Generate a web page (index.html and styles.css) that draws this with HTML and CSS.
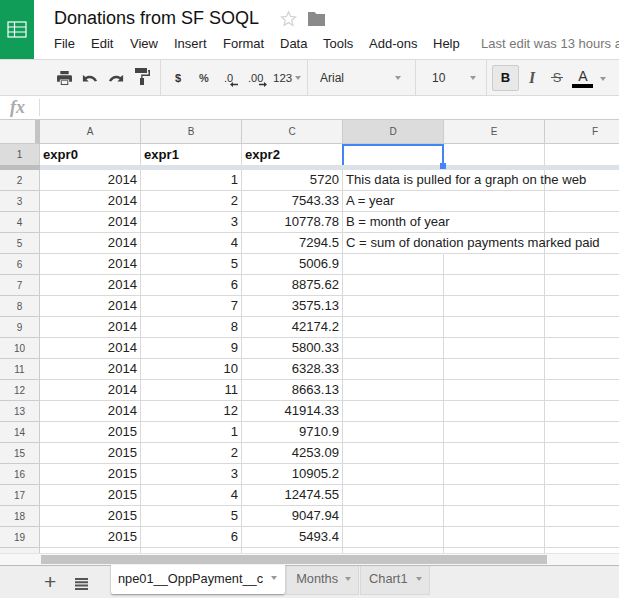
FILE: index.html
```html
<!DOCTYPE html>
<html lang="en">
<head>
<meta charset="utf-8">
<title>Donations from SF SOQL</title>
<link rel="stylesheet" href="styles.css">
</head>
<body>
<div class="app">
  <header class="header">
    <div class="logo">
      <svg width="20" height="17" viewBox="0 0 20 17" fill="none" stroke="#fff" stroke-width="1.2"><rect x="1" y="1" width="18" height="15"/><path d="M1 6h18M1 11h18M7.500 1v15"/></svg>
    </div>
    <div class="head-main">
      <div class="title-row">
        <span class="title">Donations from SF SOQL</span>
        <svg class="star" width="17" height="17" viewBox="0 0 24 24" fill="none" stroke="#d4d4d4" stroke-width="1.800"><path d="M12 2.500l2.900 6.600 7.100.7-5.400 4.700 1.600 7-6.200-3.700-6.200 3.700 1.600-7L2 9.800l7.100-.7z"/></svg>
        <svg class="folder" width="17" height="14" viewBox="0 0 17 14"><path fill="#8a8a8a" d="M0 0h6.500l2 2H17v12H0z"/></svg>
      </div>
      <nav class="menu">
        <span class="m m-file">File</span><span class="m m-edit">Edit</span><span class="m m-view">View</span><span class="m m-insert">Insert</span><span class="m m-format">Format</span><span class="m m-data">Data</span><span class="m m-tools">Tools</span><span class="m m-addons">Add-ons</span><span class="m m-help">Help</span><span class="m last-edit">Last edit was 13 hours a</span>
      </nav>
    </div>
  </header>

  <div class="toolbar">
    <div class="tb-group g-file">
      <svg width="15" height="14" viewBox="0 0 16 15"><path fill="#444" d="M3.500 0h9v3.500h-9zM1.500 4.500h13a1.500 1.500 0 0 1 1.500 1.500v5.500h-3V9H3v2.500H0V6a1.500 1.500 0 0 1 1.500-1.500zM4 10h8v5H4z"/><path fill="#f4f4f4" d="M5 10.500h6v3.500H5z"/></svg>
      <svg width="16" height="8" viewBox="0 0 16 9"><path fill="#444" d="M0 1v7.500h6.500L4 6c3-2.300 7-1.500 9.500 2.500L16 7.500C13 1.500 7 .5 3 3.500z"/></svg>
      <svg width="16" height="8" viewBox="0 0 16 9"><path fill="#444" d="M16 1v7.500H9.500L12 6C9 3.700 5 4.500 2.500 8.500L0 7.500C3 1.500 9 .5 13 3.500z"/></svg>
      <svg class="roller" width="15" height="17" viewBox="0 0 15 17"><path fill="#444" d="M0 0h12v5H0zM13 2h2v6H7.500v2H9v7H5v-7h1.200V6.500H13.500V3.500H13z"/></svg>
    </div>
    <div class="tb-group g-num">
      <span class="tb-txt cur">$</span>
      <span class="tb-txt pct">%</span>
      <span class="dec">.0<svg width="8" height="5" viewBox="0 0 8 5"><path fill="#333" d="M0 2.500 3 0v1.700h5v1.600H3V5z"/></svg></span>
      <span class="dec dec2">.00<svg width="8" height="5" viewBox="0 0 8 5"><path fill="#333" d="M8 2.500 5 0v1.700H0v1.600h5V5z"/></svg></span>
      <span class="tb-txt n123">123</span><i class="caret"></i>
    </div>
    <div class="tb-group g-font"><span class="tb-txt font-name">Arial</span><i class="caret"></i></div>
    <div class="tb-group g-size"><span class="tb-txt font-name">10</span><i class="caret"></i></div>
    <div class="tb-group g-style">
      <span class="btn-b">B</span>
      <span class="btn-i">I</span>
      <span class="btn-s">S</span>
      <span class="btn-a">A<i class="a-bar"></i></span><i class="caret"></i>
    </div>
  </div>

  <div class="formula"><span class="fx">fx</span><i class="fx-sep"></i></div>

  <div class="sheet">
    <div class="grid" id="grid">
      <div class="corner"></div><div class="ch">A</div><div class="ch">B</div><div class="ch">C</div><div class="ch ch-sel">D</div><div class="ch">E</div><div class="ch">F</div>
      <div class="rh rh-sel r1">1</div><div class="c r1 b">expr0</div><div class="c r1 b">expr1</div><div class="c r1 b">expr2</div><div class="c r1 sel-cell"><span class="sel-handle"></span></div><div class="c r1"></div><div class="c r1"></div>
      <div class="freeze"></div>
      <div class="rh">2</div><div class="c n">2014</div><div class="c n">1</div><div class="c n">5720</div><div class="c t">This data is pulled for a graph on the web</div><div class="c"></div><div class="c"></div>
      <div class="rh">3</div><div class="c n">2014</div><div class="c n">2</div><div class="c n">7543.33</div><div class="c t">A = year</div><div class="c"></div><div class="c"></div>
      <div class="rh">4</div><div class="c n">2014</div><div class="c n">3</div><div class="c n">10778.78</div><div class="c t">B = month of year</div><div class="c"></div><div class="c"></div>
      <div class="rh">5</div><div class="c n">2014</div><div class="c n">4</div><div class="c n">7294.5</div><div class="c t">C = sum of donation payments marked paid</div><div class="c"></div><div class="c"></div>
      <div class="rh">6</div><div class="c n">2014</div><div class="c n">5</div><div class="c n">5006.9</div><div class="c"></div><div class="c"></div><div class="c"></div>
      <div class="rh">7</div><div class="c n">2014</div><div class="c n">6</div><div class="c n">8875.62</div><div class="c"></div><div class="c"></div><div class="c"></div>
      <div class="rh">8</div><div class="c n">2014</div><div class="c n">7</div><div class="c n">3575.13</div><div class="c"></div><div class="c"></div><div class="c"></div>
      <div class="rh">9</div><div class="c n">2014</div><div class="c n">8</div><div class="c n">42174.2</div><div class="c"></div><div class="c"></div><div class="c"></div>
      <div class="rh">10</div><div class="c n">2014</div><div class="c n">9</div><div class="c n">5800.33</div><div class="c"></div><div class="c"></div><div class="c"></div>
      <div class="rh">11</div><div class="c n">2014</div><div class="c n">10</div><div class="c n">6328.33</div><div class="c"></div><div class="c"></div><div class="c"></div>
      <div class="rh">12</div><div class="c n">2014</div><div class="c n">11</div><div class="c n">8663.13</div><div class="c"></div><div class="c"></div><div class="c"></div>
      <div class="rh">13</div><div class="c n">2014</div><div class="c n">12</div><div class="c n">41914.33</div><div class="c"></div><div class="c"></div><div class="c"></div>
      <div class="rh">14</div><div class="c n">2015</div><div class="c n">1</div><div class="c n">9710.9</div><div class="c"></div><div class="c"></div><div class="c"></div>
      <div class="rh">15</div><div class="c n">2015</div><div class="c n">2</div><div class="c n">4253.09</div><div class="c"></div><div class="c"></div><div class="c"></div>
      <div class="rh">16</div><div class="c n">2015</div><div class="c n">3</div><div class="c n">10905.2</div><div class="c"></div><div class="c"></div><div class="c"></div>
      <div class="rh">17</div><div class="c n">2015</div><div class="c n">4</div><div class="c n">12474.55</div><div class="c"></div><div class="c"></div><div class="c"></div>
      <div class="rh">18</div><div class="c n">2015</div><div class="c n">5</div><div class="c n">9047.94</div><div class="c"></div><div class="c"></div><div class="c"></div>
      <div class="rh">19</div><div class="c n">2015</div><div class="c n">6</div><div class="c n">5493.4</div><div class="c"></div><div class="c"></div><div class="c"></div>
      <div class="rh">20</div><div class="c n">2015</div><div class="c n">7</div><div class="c n">5793</div><div class="c"></div><div class="c"></div><div class="c"></div>
    </div>
  </div>

  <div class="hscroll"><div class="hthumb"></div></div>

  <footer class="tabs">
    <span class="add">+</span>
    <svg class="list" width="13" height="12" viewBox="0 0 13 12"><path fill="#555" d="M0 0h13v2H0zM0 3.300h13v2H0zM0 6.600h13v2H0zM0 10h13v2H0z"/></svg>
    <div class="tab tab-active">npe01__OppPayment__c<i class="caret"></i></div>
    <div class="tab tab-months">Months<i class="caret"></i></div>
    <div class="tab">Chart1<i class="caret"></i></div>
  </footer>
</div>
</body>
</html>
```
FILE: styles.css
```css
* { box-sizing: border-box; }
html, body { margin: 0; padding: 0; overflow: hidden; background: #fff; }
body { font-family: "Liberation Sans", Arial, sans-serif; color: #222; }
i { font-style: normal; display: block; }

.app { width: 619px; height: 598px; display: flex; flex-direction: column; overflow: hidden; }

/* header */
.header { height: 60px; display: flex; flex: none; border-bottom: 1px solid #dcdcdc; }
.logo { width: 34px; height: 59px; background: #0f9d58; display: flex; align-items: center; justify-content: center; }
.logo svg { margin-top: -1px; }
.head-main { margin-left: 20px; flex: 1; min-width: 0; overflow: hidden; }
.title-row { height: 35px; display: flex; align-items: center; padding-top: 2px; }
.title { font-size: 18px; color: #111; width: 226px; white-space: nowrap; }
.star { margin-right: 11px; }
.menu { display: flex; white-space: nowrap; font-size: 13px; color: #222; padding-top: 1px; }
.m { flex: none; }
.m-file { width: 37px; } .m-edit { width: 39px; } .m-view { width: 44px; }
.m-insert { width: 49px; } .m-format { width: 57px; } .m-data { width: 43px; }
.m-tools { width: 46px; } .m-addons { width: 64px; } .m-help { width: 48px; }
.last-edit { color: #777; }

/* toolbar */
.toolbar { height: 36px; flex: none; background: #f4f4f4; border-bottom: 1px solid #dcdcdc; display: flex; }
.tb-group { height: 35px; display: flex; align-items: center; border-right: 1px solid #dcdcdc; flex: none; }
.g-file { width: 161px; padding-left: 57px; gap: 10px; }
.roller { margin-top: -2px; margin-left: 1px; }
.g-num { width: 147px; padding-left: 14px; font-size: 11px; }
.g-font { width: 108px; padding-left: 12px; justify-content: space-between; padding-right: 14px; }
.g-size { width: 71px; padding-left: 16px; justify-content: space-between; padding-right: 10px; }
.g-style { width: 124px; padding-left: 5px; border-right: 0; }
.tb-txt { font-size: 11px; color: #333; }
.font-name { font-size: 12px; }
.cur { font-weight: 700; width: 24px; }
.pct { font-weight: 700; width: 25px; color: #444; }
.dec { font-size: 11px; color: #333; width: 24px; position: relative; }
.dec svg { position: absolute; left: 6px; top: 10px; }
.dec2 { width: 25px; }
.dec2 svg { left: 11px; }
.n123 { font-size: 11.500px; }
.g-num .caret { margin-left: 3px; }
.caret { width: 0; height: 0; border: 3px solid transparent; border-top: 4px solid #999; border-bottom: 0; flex: none; }
.btn-b { width: 27px; height: 26px; background: #e8e8e8; border: 1px solid #ccc; border-radius: 2px; font-weight: 700; font-size: 13px; text-align: center; line-height: 24px; color: #111; }
.btn-i { width: 24px; margin-left: 1px; text-align: center; font-family: "Liberation Serif", serif; font-style: italic; font-weight: 700; font-size: 16px; color: #555; }
.btn-s { width: 24px; margin-left: 1px; text-align: center; font-size: 13px; color: #555; position: relative; }
.btn-s::after { content: ""; position: absolute; left: 6px; top: 7px; width: 12px; height: 1px; background: #555; }
.btn-a { width: 22px; margin-left: 3px; font-size: 14px; color: #333; text-align: center; position: relative; line-height: 16px; margin-top: -4px; }
.a-bar { position: absolute; left: 0; top: 16px; width: 21px; height: 4px; background: #000; }
.g-style .caret { margin-left: 6px; margin-top: 2px; }

/* formula bar */
.formula { height: 24px; flex: none; background: #fff; border-bottom: 1px solid #ccc; display: flex; align-items: center; }
.fx { font-family: "Liberation Serif", serif; font-style: italic; font-weight: 700; font-size: 18px; color: #aaa; width: 39px; padding-left: 10px; }
.fx-sep { width: 1px; height: 17px; background: #ddd; }

/* sheet */
.sheet { height: 433px; flex: none; overflow: hidden; }
.grid { display: grid; grid-template-columns: 40px repeat(6, 101px); grid-template-rows: 24px 21px 5px repeat(19, 21px); width: 646px; font-size: 13.100px; }
.corner { background: #f3f3f3; border-bottom: 1px solid #ccc; border-right: 5px solid #c4c4c4; }
.ch { background: #f3f3f3; border-right: 1px solid #ccc; border-bottom: 1px solid #ccc; display: flex; align-items: center; justify-content: center; font-size: 10px; color: #555; }
.ch-sel { background: #dcdcdc; }
.rh { background: #f3f3f3; border-right: 1px solid #ccc; border-bottom: 1px solid #ccc; display: flex; align-items: center; justify-content: center; font-size: 10px; color: #555; }
.rh-sel { background: #dcdcdc; }
.rh.r1 { border-bottom: 0; }
.c { border-right: 1px solid #d9d9d9; border-bottom: 1px solid #d9d9d9; padding: 0 3px 1px; display: flex; align-items: center; white-space: nowrap; color: #222; min-width: 0; }
.c.r1 { border-bottom: 0; }
.n { justify-content: flex-end; }
.t { overflow: visible; border-right-color: transparent; z-index: 1; }
.b { font-weight: 700; color: #111; }
.freeze { grid-column: 1 / -1; background: linear-gradient(to right, #bdbdbd 0, #bdbdbd 40px, #dde1e8 40px); }
.sel-cell { position: relative; border: 2px solid #4285f4; margin-left: -1px; }
.sel-handle { position: absolute; right: -4px; bottom: -4px; width: 6px; height: 6px; background: #4285f4; }

/* scroll bar */
.hscroll { height: 12px; flex: none; background: #f7f7f7; padding-left: 41px; border-top: 1px solid #e4e4e4; }
.hthumb { width: 506px; height: 9px; margin-top: 1px; background: #c4c4c4; }

/* tabs */
.tabs { flex: 1; background: #eee; border-top: 1px solid #bbb; display: flex; align-items: flex-start; position: relative; }
.add { font-size: 21px; line-height: 22px; color: #555; margin: 5px 0 0 44px; width: 31px; }
.list { margin-top: 12px; margin-right: 23px; flex: none; }
.tab { height: 29px; padding: 0 7px 3px 8px; display: flex; align-items: center; gap: 8px; font-size: 12.800px; color: #666; background: #e6e6e6; border: 1px solid #d8d8d8; border-top: 0; margin-right: 1px; white-space: nowrap; }
.tab-months { padding-left: 9px; padding-right: 7px; gap: 7px; }
.tab-active { background: #fff; color: #222; margin-top: -1px; border: 0; border-radius: 0 0 2px 2px; box-shadow: 0 1px 2px rgba(0,0,0,.4); padding-left: 7px; padding-right: 8px; }
```
